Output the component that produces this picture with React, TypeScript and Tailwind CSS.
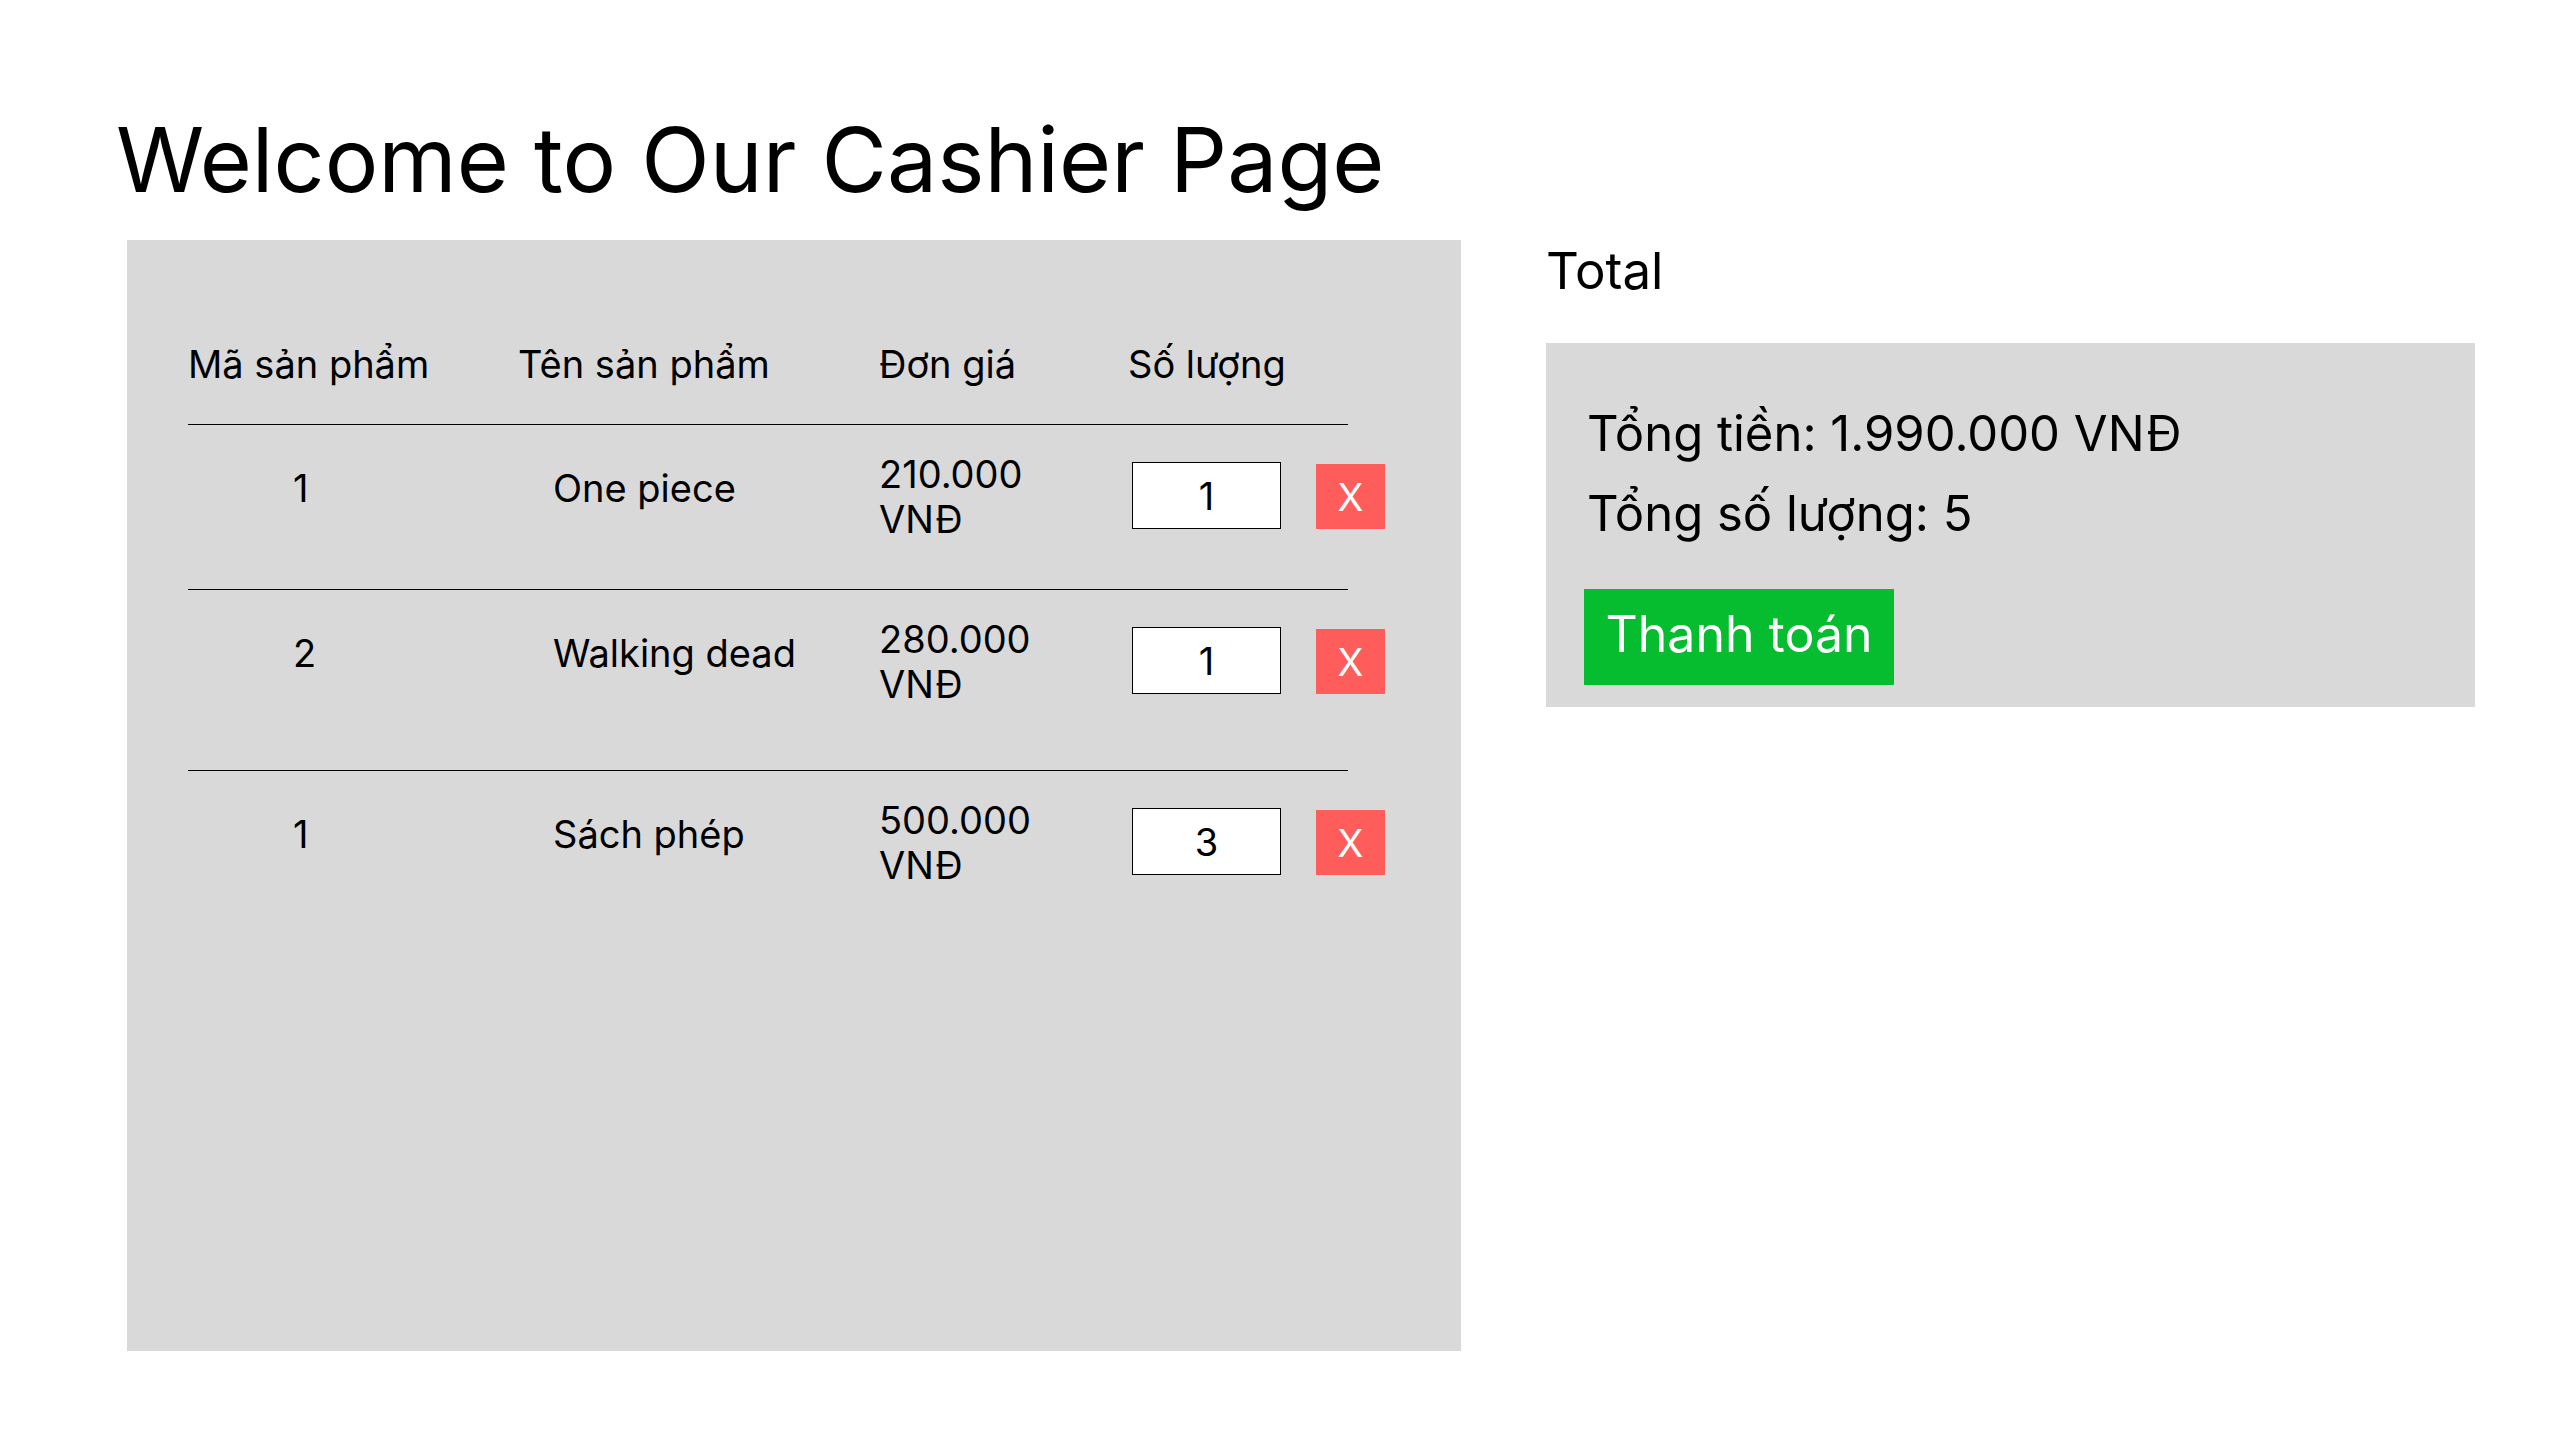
import React from "react";

type CartItem = {
  id: number;
  name: string;
  price: string;
  qty: number;
  height: string;
};

const items: CartItem[] = [
  { id: 1, name: "One piece", price: "210.000 VNĐ", qty: 1, height: "h-[165px] border-b" },
  { id: 2, name: "Walking dead", price: "280.000 VNĐ", qty: 1, height: "h-[181px] border-b" },
  { id: 1, name: "Sách phép", price: "500.000 VNĐ", qty: 3, height: "h-[170px]" },
];

const CartRow = ({ item }: { item: CartItem }) => (
  <div className={`flex w-[1160px] items-start border-black ${item.height}`}>
    <div className="w-[330px] shrink-0 pl-[105px] pt-[40px]">{item.id}</div>
    <div className="w-[361px] shrink-0 pl-[35px] pt-[40px]">{item.name}</div>
    <div className="w-[253px] shrink-0 pt-[27px]">
      <div className="w-[170px] leading-[45px]">{item.price}</div>
    </div>
    <input
      type="text"
      defaultValue={item.qty}
      className="mt-[37px] h-[67px] w-[149px] shrink-0 border border-black bg-white text-center text-[38px] outline-none"
    />
    <button className="ml-[35px] mt-[39px] flex h-[65px] w-[69px] shrink-0 items-center justify-center bg-[#ff5c5c] text-white">
      X
    </button>
  </div>
);

export default function App() {
  return (
    <div className="min-h-screen bg-white font-['Inter',sans-serif] text-black">
      <h1 className="pl-[116px] pt-[106px] text-[89.5px] font-normal leading-[108px]">
        Welcome to Our Cashier Page
      </h1>

      <div className="mt-[26px] flex items-start pl-[127px]">
        <section className="h-[1111px] w-[1334px] shrink-0 bg-[#d9d9d9] pl-[61px] pt-[101px] text-[38px] leading-[normal]">
          <div className="flex h-[84px] w-[1160px] items-start border-b border-black">
            <div className="w-[330px] shrink-0">Mã sản phẩm</div>
            <div className="w-[361px] shrink-0">Tên sản phẩm</div>
            <div className="w-[249px] shrink-0">Đơn giá</div>
            <div>Số lượng</div>
          </div>
          {items.map((item, idx) => (
            <CartRow key={idx} item={item} />
          ))}
        </section>

        <aside className="ml-[85px] w-[929px] shrink-0">
          <h2 className="text-[51px] font-normal leading-[normal]">Total</h2>
          <div className="mt-[42px] h-[364px] bg-[#d9d9d9] pl-[38px] pt-[61px] text-[49px] leading-[normal]">
            <p className="pl-[3px]">Tổng tiền: 1.990.000 VNĐ</p>
            <p className="mt-[21px] pl-[3px]">Tổng số lượng: 5</p>
            <button className="mt-[46px] h-[96px] w-[310px] bg-[#06bc2f] pb-[6px] text-[50px] leading-[normal] text-white">
              Thanh toán
            </button>
          </div>
        </aside>
      </div>
    </div>
  );
}
